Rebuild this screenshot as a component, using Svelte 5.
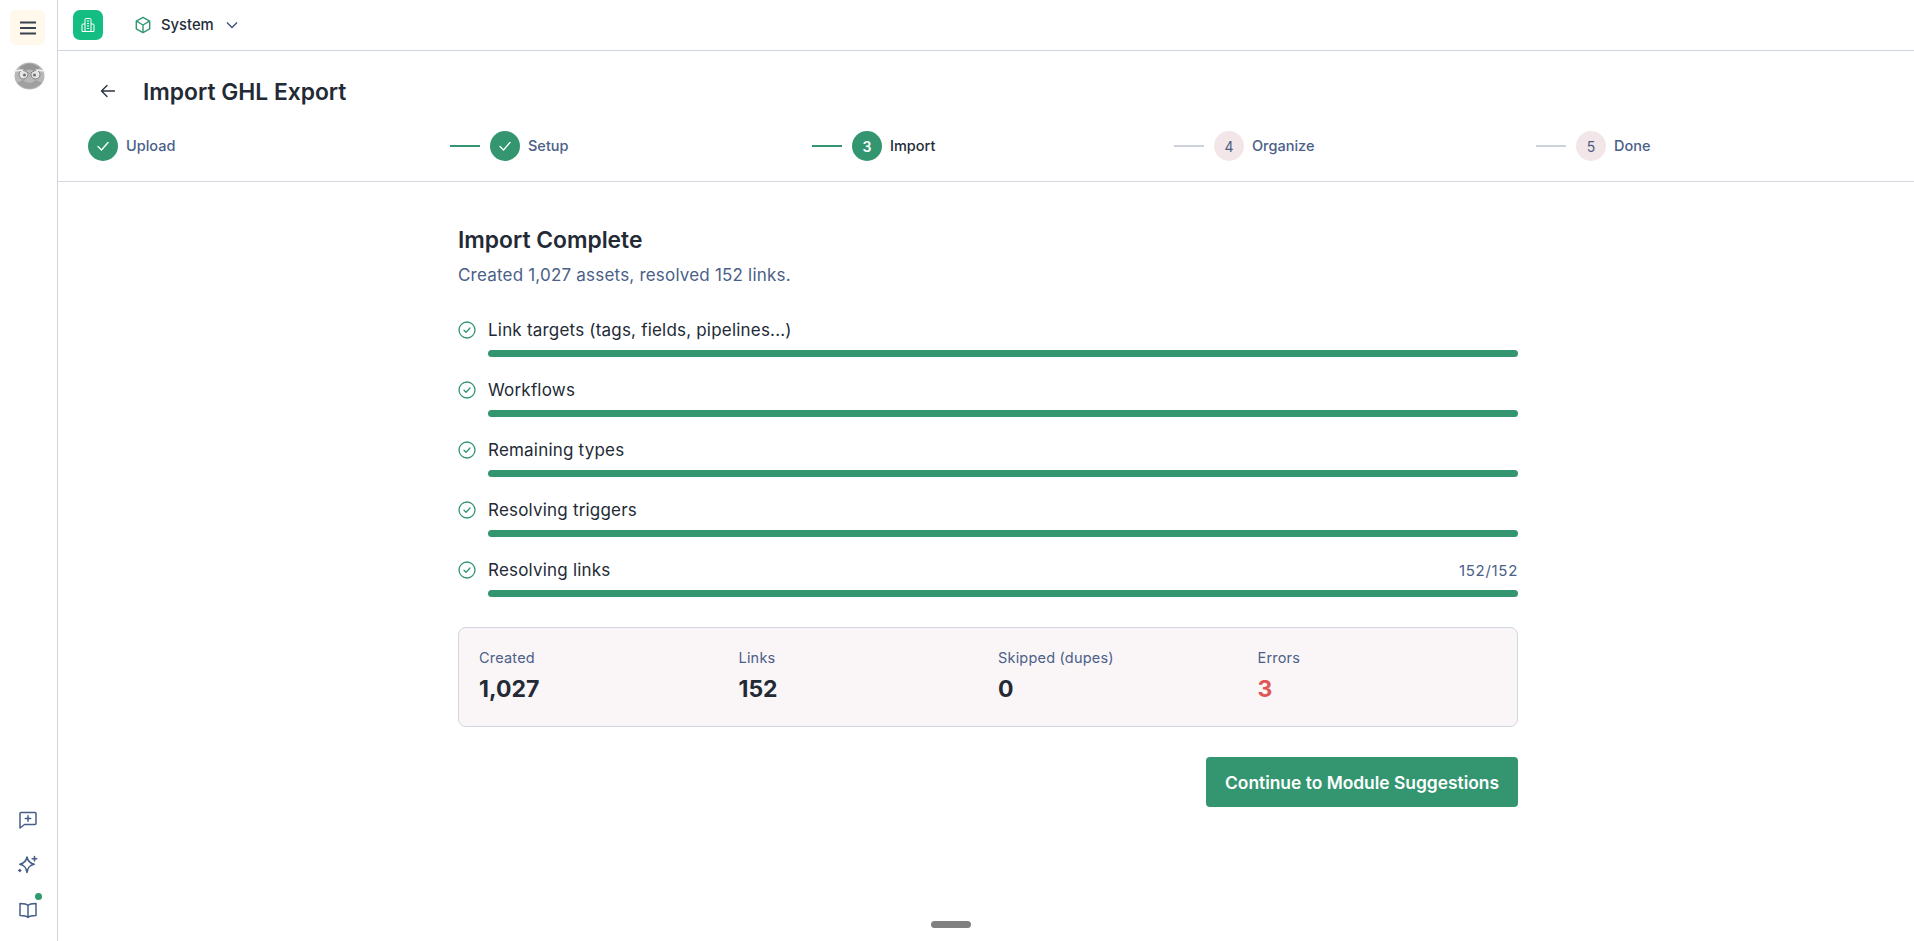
<script>
  const steps = [
    { label: 'Upload', state: 'done' },
    { label: 'Setup', state: 'done' },
    { label: 'Import', state: 'active', n: 3 },
    { label: 'Organize', state: 'todo', n: 4 },
    { label: 'Done', state: 'todo', n: 5 }
  ];
  const rows = [
    { label: 'Link targets (tags, fields, pipelines...)' },
    { label: 'Workflows' },
    { label: 'Remaining types' },
    { label: 'Resolving triggers' },
    { label: 'Resolving links', count: '152/152' }
  ];
  const stats = [
    { label: 'Created', value: '1,027' },
    { label: 'Links', value: '152' },
    { label: 'Skipped (dupes)', value: '0' },
    { label: 'Errors', value: '3', bad: true }
  ];
</script>

<div class="shell">
  <aside class="rail">
    <div class="rail-top">
      <button class="menu" aria-label="Menu">
        <svg width="18" height="18" viewBox="0 0 18 18" fill="none" stroke="#3a4150" stroke-width="2"><path d="M1 3.500h16M1 9h16M1 14.500h16"/></svg>
      </button>
      <svg class="avatar" width="33" height="28" viewBox="0 0 33 28">
        <ellipse cx="16.500" cy="14" rx="15" ry="13.500" fill="#b8b8b8"/>
        <path d="M6 6 Q16.500 -3 27 6 L22 9 Q16.500 6 11 9Z" fill="#969696"/>
        <path d="M4 21 Q16.500 32 29 21 L23 18 Q16.500 24 10 18Z" fill="#a0a0a0"/>
        <circle cx="10.500" cy="12.500" r="4.500" fill="#e6e6e6" stroke="#808080" stroke-width="1"/>
        <circle cx="22.500" cy="12.500" r="4.500" fill="#e6e6e6" stroke="#808080" stroke-width="1"/>
        <circle cx="11.500" cy="13" r="1.600" fill="#757575"/>
        <circle cx="21.500" cy="13" r="1.600" fill="#757575"/>
        <path d="M1 9l9-1 6.500 3.500L23 8l9 1" fill="none" stroke="#f0f0f0" stroke-width="1.300"/>
        <path d="M10 8l6.500 3.500L23 8" fill="none" stroke="#777" stroke-width="1"/>
      </svg>
    </div>
    <div class="rail-bottom">
      <svg width="20" height="20" viewBox="0 0 20 20" fill="none" stroke="#475f87" stroke-width="1.500" stroke-linejoin="round" stroke-linecap="round"><path d="M3 2.500h14a1 1 0 0 1 1 1v10a1 1 0 0 1-1 1H6.500L2 18V3.500a1 1 0 0 1 1-1z"/><path d="M10 5.800v5.400M7.300 8.500h5.400"/></svg>
      <svg width="22" height="22" viewBox="0 0 22 22" fill="none" stroke="#475f87" stroke-width="1.600" stroke-linejoin="round" stroke-linecap="round"><path d="M10 3c.7 4.300 2.600 6.200 7.200 7.200-4.600 1-6.500 2.900-7.200 8.300-.7-5.400-2.600-7.300-7.200-8.300C7.400 9.200 9.300 7.300 10 3z"/><path d="M17.500 2.500v4.500M15.200 4.700h4.500M2.800 15.500v2M1.800 16.500h2"/></svg>
      <div class="book">
        <svg width="20" height="20" viewBox="0 0 20 20" fill="none" stroke="#475f87" stroke-width="1.500" stroke-linejoin="round" stroke-linecap="round"><path d="M10 5.500C8.500 3.800 6 3.500 2 3.500v12c4 0 6.500.3 8 2 1.500-1.700 4-2 8-2v-12c-4 0-6.500.3-8 2zM10 5.500v12"/></svg>
        <span class="dot"></span>
      </div>
    </div>
  </aside>

  <main class="main">
    <header class="topbar">
      <div class="logo">
        <svg width="16" height="16" viewBox="0 0 16 16" fill="none" stroke="#fff" stroke-width="1" stroke-linejoin="round"><path d="M5 14.500V2.500a1 1 0 0 1 1-1h4a1 1 0 0 1 1 1v12M5 7H3a1 1 0 0 0-1 1v6.500h12V8a1 1 0 0 0-1-1h-2M7 4h2M7 6.500h2M7 9h2M7 11.500h2"/></svg>
      </div>
      <div class="workspace">
        <svg width="18" height="18" viewBox="0 0 18 18" fill="none" stroke="#339670" stroke-width="1.400" stroke-linejoin="round"><path d="M9 1.300l6.700 3.800v7.800L9 16.700l-6.700-3.800V5.100z"/><path d="M2.500 5.200L9 9l6.500-3.800M9 9v7.500"/></svg>
        <span class="wsname">System</span>
        <svg class="chev" width="14" height="14" viewBox="0 0 14 14" fill="none" stroke="#3d5078" stroke-width="1.400"><path d="M2 4.500l5 5 5-5"/></svg>
      </div>
    </header>

    <section class="pagehead">
      <div class="titlerow">
        <svg width="16" height="16" viewBox="0 0 16 16" fill="none" stroke="#2b3240" stroke-width="1.400" stroke-linecap="round" stroke-linejoin="round"><path d="M14.500 8h-13M7 2.500L1.500 8 7 13.500"/></svg>
        <h1>Import GHL Export</h1>
      </div>
      <ol class="steps">
        {#each steps as s, i}
          <li class="step">
            {#if i > 0}
              <span class="line" class:on={s.state !== 'todo'}></span>
            {/if}
            <span class="circle {s.state}">
              {#if s.state === 'done'}
                <svg width="14" height="14" viewBox="0 0 14 14" fill="none" stroke="#fff" stroke-width="1.300" stroke-linecap="round" stroke-linejoin="round"><path d="M2 7.500l3.500 3.500L12 3.500"/></svg>
              {:else}
                {s.n}
              {/if}
            </span>
            <span class="steplabel" class:current={s.state === 'active'}>{s.label}</span>
          </li>
        {/each}
      </ol>
    </section>

    <section class="body">
      <div class="column">
        <h2>Import Complete</h2>
        <p class="sub">Created 1,027 assets, resolved 152 links.</p>

        <div class="rows">
          {#each rows as r}
            <div class="row">
              <div class="rowhead">
                <svg width="18" height="18" viewBox="0 0 18 18" fill="none" stroke="#339670" stroke-width="1.300" stroke-linecap="round" stroke-linejoin="round"><circle cx="9" cy="9" r="8"/><path d="M6 9.200l2.100 2.100L12 7"/></svg>
                <span class="rowlabel">{r.label}</span>
                {#if r.count}<span class="count">{r.count}</span>{/if}
              </div>
              <div class="bar"></div>
            </div>
          {/each}
        </div>

        <div class="stats">
          {#each stats as s}
            <div>
              <div class="statlabel">{s.label}</div>
              <div class="statvalue" class:bad={s.bad}>{s.value}</div>
            </div>
          {/each}
        </div>

        <div class="actions">
          <button class="cta">Continue to Module Suggestions</button>
        </div>
      </div>
    </section>
  </main>
  <div class="handle"></div>
</div>

<style>
  :global(body) {
    margin: 0;
    background: #fff;
    font-family: Inter, sans-serif;
    color: #1f2733;
  }
  .shell {
    display: flex;
    height: 941px;
    overflow: hidden;
    position: relative;
  }
  .rail {
    width: 55px;
    flex: none;
    border-right: 1px solid #cfd5de;
    display: flex;
    flex-direction: column;
    justify-content: space-between;
    align-items: center;
    padding: 10px 2px 16px 0;
  }
  .rail-top {
    display: flex;
    flex-direction: column;
    align-items: center;
    gap: 17px;
  }
  .avatar { margin-left: 3px; }
  .menu {
    width: 35px;
    height: 35px;
    border: 0;
    border-radius: 6px;
    background: #fff8eb;
    padding: 0;
    display: flex;
    align-items: center;
    justify-content: center;
  }
  .rail-bottom {
    display: flex;
    flex-direction: column;
    align-items: center;
    gap: 24px;
    padding-bottom: 5px;
  }
  .rail-bottom svg { display: block; }
  .book { position: relative; }
  .dot {
    position: absolute;
    top: -7px;
    right: -4px;
    width: 7px;
    height: 7px;
    border-radius: 50%;
    background: #2f9a6d;
  }
  .main {
    flex: 1;
    min-width: 0;
    display: flex;
    flex-direction: column;
  }
  .topbar {
    height: 50px;
    flex: none;
    border-bottom: 1px solid #cfd5de;
    display: flex;
    align-items: center;
    padding: 0 15px;
    gap: 31px;
  }
  .logo {
    width: 30px;
    height: 30px;
    border-radius: 7px;
    background: #14bd82;
    display: flex;
    align-items: center;
    justify-content: center;
  }
  .workspace {
    display: flex;
    align-items: center;
    gap: 9px;
    font-size: 14.800px;
    font-weight: 500;
    color: #242c3a;
  }
  .wsname { margin-top: -1px; }
  .chev { margin-left: 2px; }
  .pagehead {
    height: 131px;
    flex: none;
    border-bottom: 1px solid #d4d7e0;
    padding: 0 30px;
    box-sizing: border-box;
    display: flex;
    flex-direction: column;
  }
  .titlerow {
    display: flex;
    align-items: center;
    gap: 27px;
    padding: 25px 0 0 12px;
    height: 54px;
    box-sizing: border-box;
  }
  h1 {
    margin: 0;
    font: 600 22.800px/29px Inter, sans-serif;
    color: #232a36;
    position: relative;
    top: 1px;
  }
  .steps {
    list-style: none;
    margin: 26px 0 0;
    padding: 0;
    display: flex;
  }
  .step {
    flex: 0 0 362px;
    display: flex;
    align-items: center;
    gap: 8px;
  }
  .step:last-child { flex: 1; }
  .circle {
    width: 30px;
    height: 30px;
    border-radius: 50%;
    flex: none;
    display: flex;
    align-items: center;
    justify-content: center;
    font-size: 14px;
    color: #4a5c80;
    background: #f3e6e8;
  }
  .circle.done, .circle.active {
    background: #339670;
    color: #fff;
    font-weight: 600;
  }
  .steplabel {
    font-size: 14.500px;
    font-weight: 500;
    color: #4a6088;
    margin-top: -2px;
  }
  .steplabel.current { color: #242c3a; }
  .line {
    width: 30px;
    height: 2px;
    background: #ccd1dc;
    margin-right: 2px;
  }
  .line.on { background: #339670; }
  .body {
    flex: 1;
    display: flex;
    justify-content: center;
    padding-left: 4px;
  }
  .column {
    width: 1060px;
    padding-top: 45px;
  }
  h2 {
    margin: 0;
    font: 600 22.800px/28px Inter, sans-serif;
    color: #232a36;
    position: relative;
    top: -1px;
  }
  .sub {
    margin: 8px 0 0;
    font-size: 17px;
    letter-spacing: 0.2px;
    line-height: 24px;
    color: #4a6088;
  }
  .rows {
    margin-top: 30px;
    display: flex;
    flex-direction: column;
    gap: 12px;
  }
  .row { height: 48px; }
  .rowhead {
    display: flex;
    align-items: center;
    gap: 12px;
    height: 24px;
    margin-top: 1px;
  }
  .rowlabel {
    font-size: 17px;
    letter-spacing: 0.2px;
    color: #232a36;
    margin-top: -1px;
  }
  .count {
    margin-left: auto;
    font-size: 15px;
    letter-spacing: 0.7px;
    color: #4a6088;
  }
  .bar {
    height: 7px;
    margin: 8px 0 0 30px;
    border-radius: 4px;
    background: #339670;
  }
  .stats {
    margin-top: 22px;
    height: 100px;
    box-sizing: border-box;
    border: 1px solid #d2d6e0;
    border-radius: 8px;
    background: #faf6f7;
    padding: 20px 20px 0;
    display: grid;
    grid-template-columns: repeat(4, 1fr);
    gap: 20px;
  }
  .statlabel {
    font-size: 14.500px;
    letter-spacing: 0.2px;
    line-height: 20px;
    color: #4a6088;
  }
  .statvalue {
    margin-top: 6px;
    font: 700 23px/30px Inter, sans-serif;
    color: #232a36;
  }
  .statvalue.bad { color: #e05555; }
  .actions {
    margin-top: 30px;
    display: flex;
    justify-content: flex-end;
  }
  .cta {
    width: 312px;
    height: 50px;
    border: 0;
    border-radius: 4px;
    background: #339670;
    color: #fff;
    font: 600 17.400px Inter, sans-serif;
    padding: 0;
  }
  .handle {
    position: absolute;
    left: 931px;
    top: 921px;
    width: 40px;
    height: 7px;
    border-radius: 4px;
    background: #808080;
  }
</style>
